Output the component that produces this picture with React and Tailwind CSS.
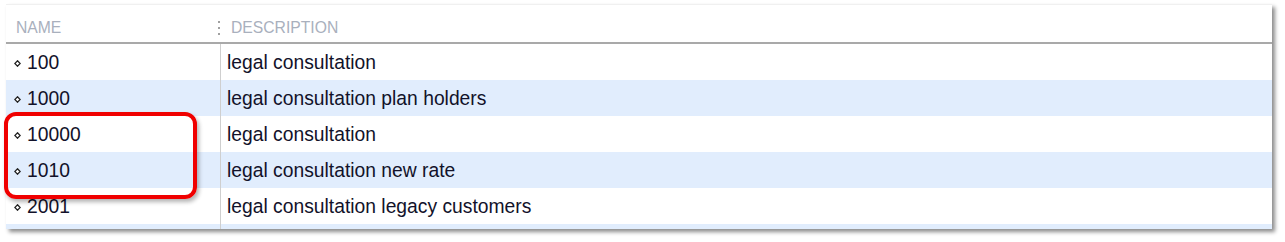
import React from 'react';

const rows = [
  { name: '100', desc: 'legal consultation' },
  { name: '1000', desc: 'legal consultation plan holders' },
  { name: '10000', desc: 'legal consultation' },
  { name: '1010', desc: 'legal consultation new rate' },
  { name: '2001', desc: 'legal consultation legacy customers' },
];

const Diamond = () => (
  <svg width="7" height="7" viewBox="0 0 7 7" className="mr-[6px] shrink-0">
    <path d="M3.5 0.8 L6.2 3.5 L3.5 6.2 L0.8 3.5 Z" fill="#fff" stroke="#222" strokeWidth="1.3" />
  </svg>
);

export default function App() {
  return (
    <div className="w-[1285px] h-[242px] bg-white pt-[4px] pl-[6px] font-['Liberation_Sans',Arial,sans-serif]">
      <div className="relative w-[1266px] h-[225px] bg-white border-t border-[#f0f0f0] shadow-[3px_3px_4px_rgba(0,0,0,0.45)]">
        <div className="flex h-[39px] border-b-2 border-[#a9a9a9] text-[15.7px] text-[#a9b0bd]">
          <div className="w-[214px] flex items-center pl-[10px] pt-[8px]">NAME</div>
          <div className="flex items-center pt-[8px]">
            <div className="flex flex-col gap-[4px] mr-[11px] -ml-[2px]">
              <span className="w-[2px] h-[2px] bg-[#a0a0a0]" />
              <span className="w-[2px] h-[2px] bg-[#a0a0a0]" />
              <span className="w-[2px] h-[2px] bg-[#a0a0a0]" />
            </div>
            DESCRIPTION
          </div>
        </div>
        <div className="h-[185px] overflow-hidden">
          {rows.map((r, i) => (
            <div
              key={r.name}
              className={`flex h-[36px] text-[19.3px] text-[#12122a] ${i % 2 ? 'bg-[#e1edfd]' : 'bg-white'}`}
            >
              <div className="w-[214px] flex items-center pl-[8px] pt-[3px]">
                <Diamond />
                {r.name}
              </div>
              <div className="flex-1 flex items-center pl-[6px] pt-[3px] border-l border-[#cfcfcf]">{r.desc}</div>
            </div>
          ))}
          <div className="flex h-[36px] bg-[#e1edfd]">
            <div className="w-[214px]" />
            <div className="flex-1 border-l border-[#cfcfcf]" />
          </div>
        </div>
        <div className="absolute left-[-2px] top-[107px] w-[193px] h-[87px] rounded-[12px] border-[4px] border-[#f00000] shadow-[2px_3px_4px_rgba(0,0,0,0.3)]" />
      </div>
    </div>
  );
}
